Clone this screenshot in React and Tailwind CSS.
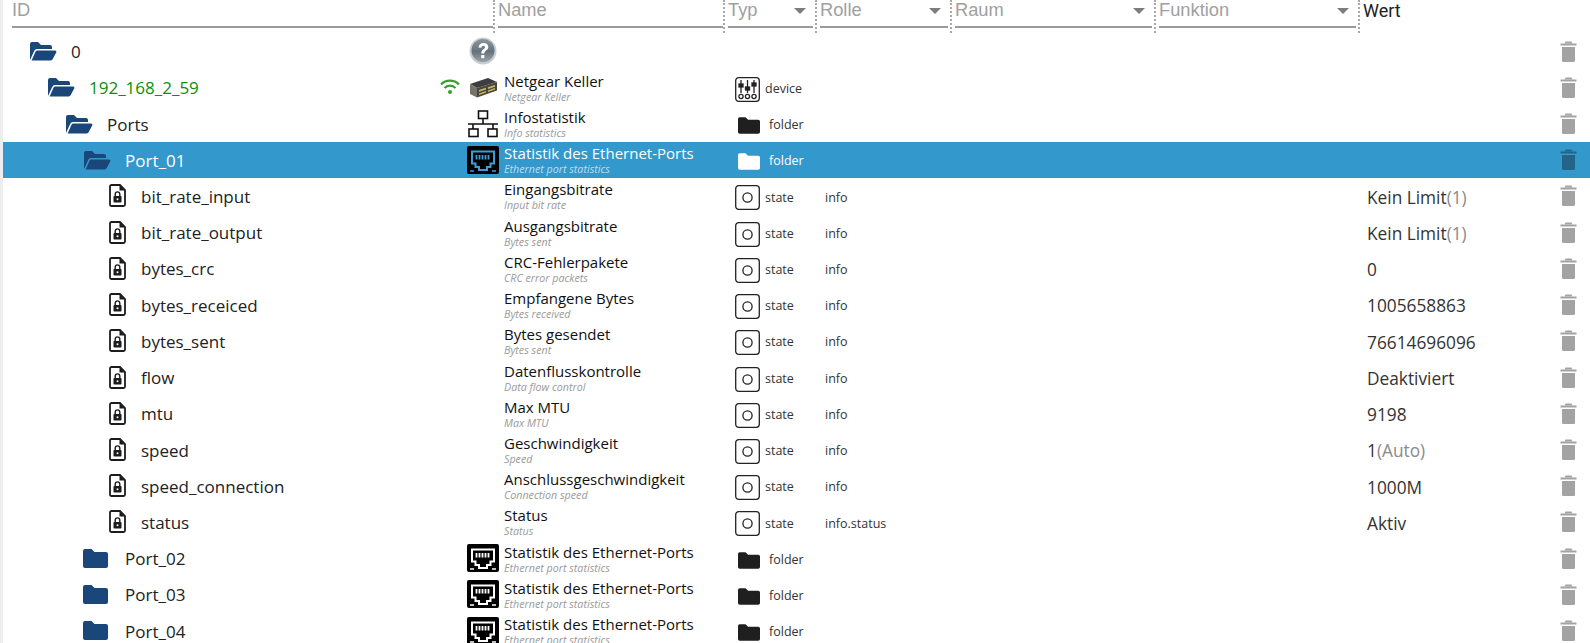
const FONT = "font-['Open_Sans','Noto_Sans',sans-serif]";

const FolderOpen = ({ color = "#19477a" }) => (
  <svg width="28" height="20" viewBox="0 0 28 20" className="shrink-0">
    <path d="M1 17V3a2 2 0 0 1 2-2h6l3 3h9a2 2 0 0 1 2 2v2H8a3 3 0 0 0-2.8 1.9L1 19z" fill={color} />
    <path d="M6.6 10.5A2 2 0 0 1 8.4 9.5H26a1.3 1.3 0 0 1 1.2 1.9l-3.6 6.9a2 2 0 0 1-1.8 1.1H2.6z" fill={color} />
  </svg>
);

const FolderClosed = ({ color = "#19477a", w = 25, h = 19 }) => (
  <svg width={w} height={h} viewBox="0 0 25 19" className="shrink-0">
    <path d="M0 2a2 2 0 0 1 2-2h6.5l3 3H23a2 2 0 0 1 2 2v12a2 2 0 0 1-2 2H2a2 2 0 0 1-2-2z" fill={color} />
  </svg>
);

const FileLock = () => (
  <svg width="17" height="23" viewBox="0 0 17 23" className="shrink-0">
    <path d="M2.5 1h8.5l5 5v14.5a1.5 1.5 0 0 1-1.5 1.5h-12A1.5 1.5 0 0 1 1 20.500V2.500A1.500 1.500 0 0 1 2.500 1z" fill="#fff" stroke="#1c1c1c" strokeWidth="1.8" />
    <path d="M10.500 1v5.500H16z" fill="#1c1c1c" />
    <rect x="4.500" y="12" width="8" height="6.500" rx="0.800" fill="#1c1c1c" />
    <path d="M6.200 12V10.200a2.300 2.300 0 0 1 4.600 0V12" fill="none" stroke="#1c1c1c" strokeWidth="1.400" />
    <circle cx="8.500" cy="15.200" r="1" fill="#fff" />
  </svg>
);

const Trash = ({ dark }) => {
  const c = dark ? "#236487" : "#a3a3a3";
  return (
    <svg width="17" height="21" viewBox="0 0 17 21">
      <path d="M5.500 0.500h6L12.500 2.500H4.500z" fill={c} />
      <rect x="0.500" y="2.500" width="16" height="2" fill={c} />
      <path d="M2 6h13v13.500a1.500 1.500 0 0 1-1.500 1.500h-10A1.500 1.500 0 0 1 2 19.500z" fill={c} />
    </svg>
  );
};

const Wifi = () => (
  <svg width="20" height="16" viewBox="0 0 20 16">
    <path d="M1 5.500a12.500 12.500 0 0 1 18 0" fill="none" stroke="#35a02f" strokeWidth="2.200" />
    <path d="M4.500 9a7.500 7.500 0 0 1 11 0" fill="none" stroke="#35a02f" strokeWidth="2.200" />
    <circle cx="10" cy="13" r="2" fill="#35a02f" />
  </svg>
);

const Question = () => (
  <svg width="28" height="28" viewBox="0 0 28 28">
    <defs>
      <linearGradient id="qg" x1="0" y1="0" x2="0" y2="1">
        <stop offset="0" stopColor="#8a969e" />
        <stop offset="0.55" stopColor="#66727b" />
        <stop offset="1" stopColor="#9aa3a8" />
      </linearGradient>
    </defs>
    <circle cx="14" cy="14" r="13.500" fill="#c8cdd0" />
    <circle cx="14" cy="13.500" r="11.500" fill="url(#qg)" />
    <path d="M9.500 10.500c.3-3 2.400-4.500 5-4.500 2.800 0 4.800 1.600 4.800 4 0 3.400-4 3.400-4 6.500h-3c0-4.400 3.700-4.400 3.700-6.300 0-1-.7-1.500-1.700-1.500-1.100 0-1.800.7-1.900 2.100z" fill="#fff" />
    <rect x="12.200" y="18" width="3.200" height="3.200" rx="0.600" fill="#fff" />
  </svg>
);

const Switch = () => (
  <svg width="29" height="21" viewBox="0 0 29 21">
    <path d="M1 7 L19 1 L28 5 L8 11z" fill="#3d3d3f" />
    <path d="M1 7 L8 11 V20.500 L1 17z" fill="#77736a" />
    <path d="M8 11 L28 5 V13.500 L8 20.500z" fill="#4a473f" />
    <path d="M10 13l7-2.200v1.700l-7 2.200zM19 10.200l7-2.200v1.700l-7 2.200zM10 16.500l7-2.400v1.500l-7 2.400zM19 13.400l7-2.400v1.500l-7 2.400z" fill="#c9bb62" />
  </svg>
);

const Network = () => (
  <svg width="32" height="28" viewBox="0 0 32 28" fill="none" stroke="#111" strokeWidth="1.600">
    <rect x="11.500" y="1" width="9" height="7.500" />
    <path d="M16 8.500V14M1 14H31M6 14V19M26 14V19" />
    <rect x="2" y="19" width="9" height="7.500" />
    <rect x="21" y="19" width="9" height="7.500" />
  </svg>
);

const Ethernet = ({ line }) => (
  <svg width="32" height="28" viewBox="0 0 32 28">
    <rect width="32" height="28" rx="2" fill="#000" />
    <path d="M5 5.500h22v12h-3.500v3.500h-3.500v3H12v-3H8.500v-3.500H5z" fill="none" stroke={line} strokeWidth="2" />
    <path d="M9.500 9v4.500M12.500 9v4.500M15.500 9v4.500M18.500 9v4.500M21.500 9v4.500" stroke={line} strokeWidth="1.800" />
    <path d="M3 25h4M25 25h4" stroke={line} strokeWidth="1.500" />
  </svg>
);

const DeviceIcon = () => (
  <svg width="25" height="25" viewBox="0 0 25 25" fill="none" stroke="#222" strokeWidth="1.300">
    <rect x="0.700" y="0.700" width="23.600" height="23.600" rx="3" />
    <path d="M6 3v13M12.500 3v13M19 3v13" />
    <rect x="4" y="7" width="4" height="3" fill="#222" />
    <rect x="10.500" y="10" width="4" height="3" fill="#222" />
    <rect x="17" y="6" width="4" height="3" fill="#222" />
    <circle cx="6" cy="19.500" r="2.100" />
    <circle cx="12.500" cy="19.500" r="2.100" />
    <circle cx="19" cy="19.500" r="2.100" />
  </svg>
);

const StateIcon = () => (
  <svg width="25" height="25" viewBox="0 0 25 25" fill="none" stroke="#222">
    <rect x="0.700" y="0.700" width="23.600" height="23.600" rx="3" strokeWidth="1.300" />
    <circle cx="12.500" cy="12.500" r="4.600" strokeWidth="1.300" />
  </svg>
);

const rows = [
  { id: "0", lvl: 0, icon: "open", pic: "q" },
  { id: "192_168_2_59", lvl: 1, icon: "open", green: true, wifi: true, pic: "switch", name: "Netgear Keller", sub: "Netgear Keller", type: "device" },
  { id: "Ports", lvl: 2, icon: "open", pic: "net", name: "Infostatistik", sub: "Info statistics", type: "folder" },
  { id: "Port_01", lvl: 3, icon: "open", sel: true, pic: "eth", name: "Statistik des Ethernet-Ports", sub: "Ethernet port statistics", type: "folder" },
  { id: "bit_rate_input", lvl: 4, icon: "file", name: "Eingangsbitrate", sub: "Input bit rate", type: "state", role: "info", val: "Kein Limit", extra: "(1)" },
  { id: "bit_rate_output", lvl: 4, icon: "file", name: "Ausgangsbitrate", sub: "Bytes sent", type: "state", role: "info", val: "Kein Limit", extra: "(1)" },
  { id: "bytes_crc", lvl: 4, icon: "file", name: "CRC-Fehlerpakete", sub: "CRC error packets", type: "state", role: "info", val: "0" },
  { id: "bytes_receiced", lvl: 4, icon: "file", name: "Empfangene Bytes", sub: "Bytes received", type: "state", role: "info", val: "1005658863" },
  { id: "bytes_sent", lvl: 4, icon: "file", name: "Bytes gesendet", sub: "Bytes sent", type: "state", role: "info", val: "76614696096" },
  { id: "flow", lvl: 4, icon: "file", name: "Datenflusskontrolle", sub: "Data flow control", type: "state", role: "info", val: "Deaktiviert" },
  { id: "mtu", lvl: 4, icon: "file", name: "Max MTU", sub: "Max MTU", type: "state", role: "info", val: "9198" },
  { id: "speed", lvl: 4, icon: "file", name: "Geschwindigkeit", sub: "Speed", type: "state", role: "info", val: "1", extra: "(Auto)" },
  { id: "speed_connection", lvl: 4, icon: "file", name: "Anschlussgeschwindigkeit", sub: "Connection speed", type: "state", role: "info", val: "1000M" },
  { id: "status", lvl: 4, icon: "file", name: "Status", sub: "Status", type: "state", role: "info.status", val: "Aktiv" },
  { id: "Port_02", lvl: 3, icon: "closed", pic: "eth", name: "Statistik des Ethernet-Ports", sub: "Ethernet port statistics", type: "folder" },
  { id: "Port_03", lvl: 3, icon: "closed", pic: "eth", name: "Statistik des Ethernet-Ports", sub: "Ethernet port statistics", type: "folder" },
  { id: "Port_04", lvl: 3, icon: "closed", pic: "eth", name: "Statistik des Ethernet-Ports", sub: "Ethernet port statistics", type: "folder" },
];

const indent = ["pl-[26px]", "pl-[44px]", "pl-[62px]", "pl-[80px]", "pl-[106px]"];
const gapFor = ["w-[14px]", "w-[14px]", "w-[14px]", "w-[14px]", "w-[15px]"];

const HeadCell = ({ label, w, arrow }) => (
  <div className={`${w} shrink-0 h-full flex`}>
    <div className="w-[2px] border-l-2 border-dotted border-[#a9a9a9] h-full" />
    <div className={`flex-1 ml-[3px] ${arrow ? "mr-[2px]" : ""} border-b-2 border-[#9a9a9a] flex items-start justify-between h-[28px] min-w-0`}>
      <span className="text-[#a0a0a0] text-[18.3px] leading-[20px] font-['Liberation_Sans',sans-serif]">{label}</span>
      {arrow && <span className="w-0 h-0 mt-[8px] mr-[7px] border-x-[6px] border-x-transparent border-t-[6px] border-t-[#7d7d7d]" />}
    </div>
  </div>
);

function Row({ r }) {
  const eth = r.sel ? "#3a9fd8" : "#fff";
  return (
    <div className={`h-[36.22px] flex items-center ${r.sel ? "bg-[#3398cc]" : ""}`}>
      <div className={`w-[447px] shrink-0 flex items-center ${indent[r.lvl]}`}>
        {r.icon === "open" && <FolderOpen />}
        {r.icon === "closed" && <FolderClosed />}
        {r.icon === "file" && <FileLock />}
        <div className={r.icon === "closed" ? "w-[17px]" : gapFor[r.lvl]} />
        <span className={`text-[17px] leading-none mt-[1px] ${r.green ? "text-[#0a8f0a]" : r.sel ? "text-white" : "text-[#222]"}`}>{r.id}</span>
      </div>
      <div className="w-[16px] shrink-0 -ml-[8px] mr-[8px] flex justify-center">
        {r.wifi && <div className="-ml-[1px]"><Wifi /></div>}
      </div>
      <div className="w-[34px] shrink-0 flex justify-center">
        {r.pic === "q" && <Question />}
        {r.pic === "switch" && <Switch />}
        {r.pic === "net" && <Network />}
        {r.pic === "eth" && <Ethernet line={eth} />}
      </div>
      <div className="w-[235px] shrink-0 pl-[4px] flex flex-col justify-center pt-[1px]">
        {r.name && (
          <>
            <span className={`text-[15px] leading-[18px] whitespace-nowrap ${r.sel ? "text-white" : "text-[#111]"}`}>{r.name}</span>
            <span className={`text-[10.7px] leading-[14px] italic whitespace-nowrap ${r.sel ? "text-[#b9def0]" : "text-[#9a9a9a]"}`}>{r.sub}</span>
          </>
        )}
      </div>
      <div className="w-[90px] shrink-0 flex items-center mt-[4px]">
        {r.type === "device" && <div className="flex items-center gap-[5px]"><DeviceIcon /><span className="text-[12.5px] text-[#333]">device</span></div>}
        {r.type === "state" && <div className="flex items-center gap-[5px]"><StateIcon /><span className="text-[12.5px] text-[#333]">state</span></div>}
        {r.type === "folder" && (
          <div className="ml-[3px] flex items-center gap-[9px]">
            <FolderClosed color={r.sel ? "#fff" : "#1f1f1f"} w={22} h={17} />
            <span className={`text-[12.5px] ${r.sel ? "text-white" : "text-[#333]"}`}>folder</span>
          </div>
        )}
      </div>
      <div className="w-[542px] shrink-0 text-[12.5px] text-[#333] mt-[4px]">{r.role}</div>
      <div className="flex-1 text-[17.3px] text-[#333] leading-none whitespace-nowrap mt-[3px]">
        {r.val}
        {r.extra && <span className="text-[#8a8a8a]">{r.extra}</span>}
      </div>
      <div className="w-[30px] shrink-0 mr-[7px] flex justify-center">
        <Trash dark={r.sel} />
      </div>
    </div>
  );
}

export default function App() {
  return (
    <div className={`h-[643px] w-[1590px] overflow-hidden bg-white ${FONT} border-l-[3px] border-[#eeeeee]`}>
      <div className="h-[33px] flex pl-[9px]">
        <div className="w-[481px] shrink-0 border-b-2 border-[#9a9a9a] h-[28px]">
          <span className="text-[#a0a0a0] text-[18.3px] leading-[20px] block font-['Liberation_Sans',sans-serif]">ID</span>
        </div>
        <HeadCell label="Name" w="w-[230px]" />
        <HeadCell label="Typ" w="w-[92px]" arrow />
        <HeadCell label="Rolle" w="w-[135px]" arrow />
        <HeadCell label="Raum" w="w-[204px]" arrow />
        <HeadCell label="Funktion" w="w-[204px]" arrow />
        <div className="w-[2px] border-l-2 border-dotted border-[#a9a9a9] h-full" />
        <span className="ml-[3px] text-[#222] text-[18px] leading-[22px] font-['Roboto',sans-serif]">Wert</span>
      </div>
      {rows.map((r) => <Row key={r.id} r={r} />)}
    </div>
  );
}
